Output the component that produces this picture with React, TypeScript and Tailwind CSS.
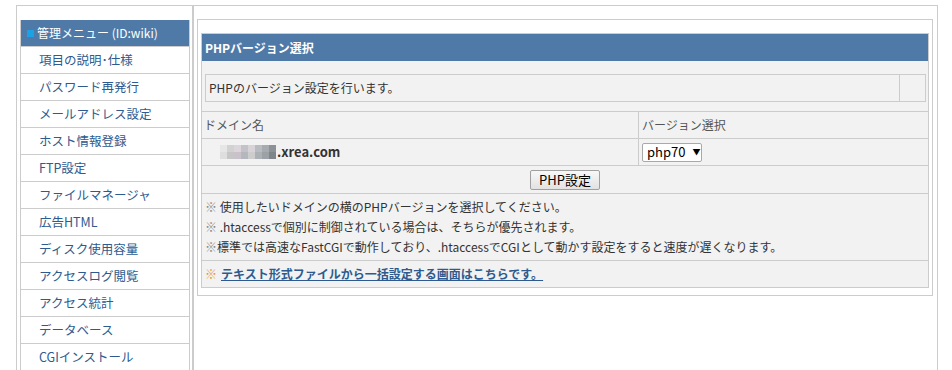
import React from "react";

const MENU = [
  "項目の説明･仕様",
  "パスワード再発行",
  "メールアドレス設定",
  "ホスト情報登録",
  "FTP設定",
  "ファイルマネージャ",
  "広告HTML",
  "ディスク使用容量",
  "アクセスログ閲覧",
  "アクセス統計",
  "データベース",
  "CGIインストール",
];

const MOSAIC = [
  ["#e6e6e6", "#d2d2d2", "#dcd6dc", "#c2c2c8", "#d8d3d8", "#b8bcc0", "#a6abb0", "#8c9298"],
  ["#dedede", "#c6c6c6", "#cac2ca", "#b4b7bd", "#cdcdcd", "#acb1b5", "#9ba1a6", "#7e858b"],
];

function Mosaic() {
  return (
    <span className="inline-flex flex-col align-middle mr-px">
      {MOSAIC.map((row, i) => (
        <span key={i} className="flex">
          {row.map((c, j) => (
            <span key={j} className="block w-[7px] h-[7px]" style={{ backgroundColor: c }} />
          ))}
        </span>
      ))}
    </span>
  );
}

function Sidebar() {
  return (
    <div className="w-[177px] shrink-0 border border-[#cccccc] pt-[14px] pl-[3px] pr-[2px] pb-4">
      <div className="border-l border-r border-[#cccccc]">
        <div className="h-[26px] bg-[#4f7aa8] flex items-center pl-[6px] text-white text-[12px]">
          <span className="inline-block w-[7px] h-[7px] bg-[#19a2e6] mr-[3px]" />
          管理メニュー (ID:wiki)
        </div>
        {MENU.map((m) => (
          <div
            key={m}
            className="h-[27px] border-t border-[#cccccc] flex items-center pl-[18px] text-[12.5px] text-[#2d5b8f]"
          >
            {m}
          </div>
        ))}
      </div>
    </div>
  );
}

function Main() {
  return (
    <div className="w-[745px] shrink-0 border border-[#cccccc] pt-[13px] pl-[3px] pr-[4px]">
      <div className="border border-[#cccccc] pt-[13px] pl-[3px] pr-[3px] pb-[7px]">
        <div className="border border-[#cccccc] bg-[#f2f2f2] text-[12px] text-[#333333]">
          <div className="h-[27px] bg-[#4f7aa8] flex items-center pl-[3px] text-white font-bold">
            PHPバージョン選択
          </div>
          <div className="h-[50px] pt-[13px] pl-[3px] pr-[2px]">
            <div className="flex h-[28px] border border-[#cccccc]">
              <div className="flex-1 flex items-center pl-[3px] border-r border-[#cccccc]">
                PHPのバージョン設定を行います。
              </div>
              <div className="w-[25px]" />
            </div>
          </div>
          <div className="flex h-[27px] border-t border-[#cccccc] text-[#555555]">
            <div className="w-[437px] flex items-center pl-[2px] border-r border-[#cccccc]">
              ドメイン名
            </div>
            <div className="flex-1 flex items-center pl-[3px]">バージョン選択</div>
          </div>
          <div className="flex h-[27px] border-t border-[#cccccc]">
            <div className="w-[437px] flex items-center pl-[18px] border-r border-[#cccccc]">
              <Mosaic />
              <span className="font-bold text-[13px] text-[#333333]">.xrea.com</span>
            </div>
            <div className="flex-1 flex items-center pl-[3px]">
              <div className="h-[19px] w-[60px] bg-white border border-[#a9a9a9] rounded-[2px] flex items-center pl-[4px] text-[13px] text-black">
                php70
                <span className="ml-[7px] text-[8px]">▼</span>
              </div>
            </div>
          </div>
          <div className="h-[28px] border-t border-[#cccccc] flex items-center justify-center">
            <button className="h-[20px] px-[8px] border border-[#a0a0a0] rounded-[2px] bg-gradient-to-b from-[#f8f8f8] to-[#e2e2e2] text-[13px] text-black leading-none">
              PHP設定
            </button>
          </div>
          <div className="h-[67px] border-t border-[#cccccc] pl-[3px] pt-[3px] leading-[20px]">
            <div>
              <span className="text-[#888888]">※ </span>使用したいドメインの横のPHPバージョンを選択してください。
            </div>
            <div>
              <span className="text-[#888888]">※ </span>.htaccessで個別に制御されている場合は、そちらが優先されます。
            </div>
            <div>
              <span className="text-[#888888]">※</span>標準では高速なFastCGIで動作しており、.htaccessでCGIとして動かす設定をすると速度が遅くなります。
            </div>
          </div>
          <div className="h-[27px] border-t border-[#cccccc] flex items-center pl-[3px]">
            <span className="text-[#e8963a] mr-[4px]">※</span>
            <a href="#" className="text-[#2d5b8f] font-bold underline">
              テキスト形式ファイルから一括設定する画面はこちらです。
            </a>
          </div>
        </div>
      </div>
    </div>
  );
}

export default function App() {
  return (
    <div
      className="w-[952px] h-[370px] overflow-hidden bg-white"
      style={{ fontFamily: '"Noto Sans CJK JP", sans-serif' }}
    >
      <div className="flex items-stretch pt-[5px] pl-[16px]">
        <Sidebar />
        <Main />
      </div>
    </div>
  );
}
